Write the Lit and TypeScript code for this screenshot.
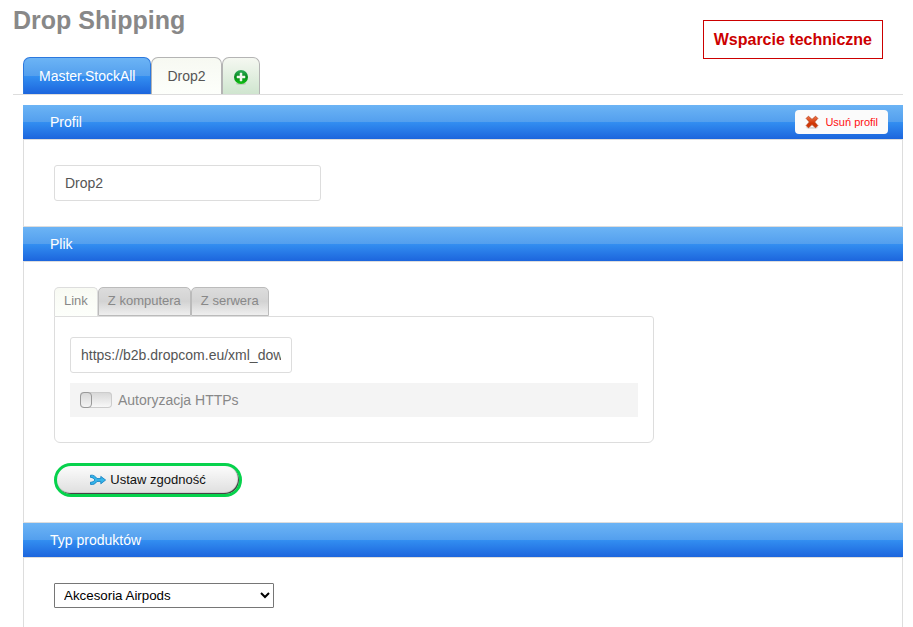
import { LitElement, html, css } from "lit";
import { customElement, state } from "lit/decorators.js";

const plusIcon = html`
  <svg width="16" height="16" viewBox="0 0 16 16" aria-hidden="true">
    <defs>
      <linearGradient id="plus-fill" x1="0" y1="0" x2="0" y2="1">
        <stop offset="0" stop-color="#2fae5c" />
        <stop offset="0.5" stop-color="#058a1c" />
        <stop offset="1" stop-color="#10c410" />
      </linearGradient>
    </defs>
    <ellipse cx="8" cy="14.8" rx="5" ry="1" fill="#000" opacity="0.15" />
    <circle cx="8" cy="8" r="7" fill="url(#plus-fill)" />
    <path d="M7 4h2v3h3v2H9v3H7V9H4V7h3z" fill="#f1f6ef" stroke="#f1f6ef" stroke-width="0.5" />
  </svg>
`;

const crossIcon = html`
  <svg width="14" height="14" viewBox="0 0 14 14" aria-hidden="true">
    <defs>
      <linearGradient id="cross-fill" x1="0" y1="0" x2="0" y2="1">
        <stop offset="0" stop-color="#f0764a" />
        <stop offset="0.6" stop-color="#d03605" />
      </linearGradient>
    </defs>
    <ellipse cx="7" cy="12.8" rx="6.5" ry="0.9" fill="#000" opacity="0.15" />
    <path
      d="M3.4 1.2 7 4.400l3.600-3.200 2.200 2.200L9.600 7l3.200 3.600-2.200 2.200L7 9.600l-3.600 3.200-2.200-2.200L4.400 7 1.200 3.400z"
      fill="url(#cross-fill)"
      stroke="#b8380f"
      stroke-width="0.8"
      stroke-linejoin="round"
    />
  </svg>
`;

const mergeIcon = html`
  <svg width="16" height="12" viewBox="0 0 16 12" aria-hidden="true">
    <path
      d="M.5 1.2C3.500 .8 5.500 2.400 7 4.600h3.800V2.400L15.600 6l-4.800 3.800V7.400H7C5.500 9.600 3.500 11 .5 10.400V8.200C2.500 8.300 4 7.400 4.900 6 4 4.300 2.500 3.400 .5 3.400z"
      fill="#35b5ea"
      stroke="#1683c4"
      stroke-width="0.9"
      stroke-linejoin="round"
    />
  </svg>
`;

@customElement("app-root")
export class AppRoot extends LitElement {
  static styles = css`
    :host {
      display: block;
      min-height: 100vh;
      padding: 0 10px 0 13px;
      box-sizing: border-box;
      background: #fff;
      color: #555;
      font: 14px/16px "Liberation Sans", Arial, sans-serif;
      --line: #ddd;
      --glossy: linear-gradient(#6cb4f5, #539fee 50%, #338ff1 50%, #1c65dd);
    }
    * {
      box-sizing: border-box;
    }
    button,
    input {
      font: inherit;
      color: inherit;
      margin: 0;
    }
    button {
      cursor: pointer;
    }
    svg {
      display: block;
      flex: none;
    }
    .top {
      display: flex;
      justify-content: space-between;
      align-items: flex-start;
      padding-right: 20px;
      border-bottom: 1px solid var(--line);
    }
    .title {
      margin: 0 0 17px;
      font-size: 25px;
      line-height: 40px;
      color: #888;
    }
    .support {
      margin-top: 20px;
      padding: 10px;
      border: 1px solid #c00;
      color: #c00;
      font-size: 16px;
      line-height: 17px;
      font-weight: bold;
      text-decoration: none;
    }
    .tabs {
      display: flex;
      padding-left: 10px;
    }
    .tab {
      display: flex;
      align-items: center;
      height: 37px;
      padding: 0 15px;
      border: 1px solid #b4b4b4;
      border-bottom: 0;
      border-radius: 7px 7px 0 0;
      background: linear-gradient(#f7f9f2, #fdfffb);
    }
    .tab.main {
      border-color: #2b78de;
      background: var(--glossy);
      color: #fff;
    }
    .tab.add {
      padding: 2px 10px 0;
      background: linear-gradient(#f5f8f1, #cfe5cf);
    }
    .sections {
      margin: 10px 0 0 10px;
    }
    .bar {
      display: flex;
      align-items: center;
      justify-content: space-between;
      height: 34px;
      padding: 0 15px 0 27px;
      background: var(--glossy);
      color: #fff;
    }
    .bar h2 {
      margin: 0;
      font-size: 14px;
      font-weight: normal;
    }
    .remove {
      display: flex;
      align-items: center;
      gap: 6px;
      height: 24px;
      padding: 0 10px;
      border: 0;
      border-radius: 4px;
      background: #fbfbfb;
      color: #f11;
      font-size: 11px;
    }
    .body {
      padding: 25px 30px;
      border: 1px solid var(--line);
    }
    .field {
      display: block;
      height: 36px;
      padding: 0 10px;
      border: 1px solid var(--line);
      border-radius: 3px;
      background: #fff;
      outline: 0;
    }
    .name {
      width: 267px;
    }
    .url {
      width: 222px;
    }
    .subtabs {
      display: flex;
    }
    .subtab {
      height: 29px;
      padding: 0 9px 2px;
      border: 1px solid #bbb;
      border-radius: 5px 5px 0 0;
      background: linear-gradient(#dcdcdc, #d3d3d3 50%, #efefef);
      color: #888;
      font-size: 13px;
    }
    .subtab.current {
      border-color: var(--line);
      border-bottom: 0;
      background: linear-gradient(#f8faf3, #fdfffb);
    }
    .source {
      max-width: 600px;
      padding: 20px 15px 25px;
      border: 1px solid var(--line);
      border-radius: 0 3px 6px 6px;
    }
    .auth {
      display: flex;
      align-items: center;
      gap: 6px;
      height: 34px;
      margin-top: 10px;
      padding: 0 10px;
      background: #f4f4f4;
      color: #888;
    }
    .switch {
      appearance: none;
      display: flex;
      width: 32px;
      height: 16px;
      border-radius: 4px;
      background: linear-gradient(#d6d6d6, #fafafa);
      box-shadow: inset 0 0 0 1px #ccc;
    }
    .switch::before {
      content: "";
      box-sizing: border-box;
      width: 12px;
      height: 16px;
      border: 1px solid #999;
      border-radius: 4px;
      background: linear-gradient(#d8d8d8, #f4f4f4);
    }
    .switch:checked {
      justify-content: flex-end;
    }
    .match {
      display: flex;
      align-items: center;
      justify-content: center;
      gap: 4px;
      width: 188px;
      height: 34px;
      margin-top: 20px;
      padding: 0;
      border: 3px solid #06d24c;
      border-radius: 17px;
      background: linear-gradient(#fcfcfc, #dedede);
      box-shadow: inset -1px -1px 1px #333;
      color: #111;
      font-size: 13px;
    }
    .type {
      display: block;
      width: 220px;
      height: 25px;
      padding: 0 5px;
      border: 1px solid #767676;
      border-radius: 1px;
      background: #fff;
      color: #000;
      font-family: inherit;
    }
  `;

  @state() private source = 0;

  private sources = ["Link", "Z komputera", "Z serwera"];

  render() {
    return html`
      <header class="top">
        <div>
          <h1 class="title">Drop Shipping</h1>
          <nav class="tabs">
            <button class="tab main">Master.StockAll</button>
            <button class="tab">Drop2</button>
            <button class="tab add" aria-label="Dodaj profil">${plusIcon}</button>
          </nav>
        </div>
        <a class="support" href="#">Wsparcie techniczne</a>
      </header>

      <main class="sections">
        <section>
          <div class="bar">
            <h2>Profil</h2>
            <button class="remove">${crossIcon} Usuń profil</button>
          </div>
          <div class="body">
            <input class="field name" type="text" aria-label="Profil" value="Drop2" />
          </div>
        </section>

        <section>
          <div class="bar"><h2>Plik</h2></div>
          <div class="body">
            <div class="subtabs">
              ${this.sources.map(
                (label, i) => html`<button
                  class="subtab ${i === this.source ? "current" : ""}"
                  @click=${() => (this.source = i)}
                >${label}</button>`
              )}
            </div>
            <div class="source">
              <input
                class="field url"
                type="text"
                aria-label="Link"
                value="https://b2b.dropcom.eu/xml_download"
              />
              <div class="auth">
                <input class="switch" id="auth" type="checkbox" />
                <label for="auth">Autoryzacja HTTPs</label>
              </div>
            </div>
            <button class="match">${mergeIcon} Ustaw zgodność</button>
          </div>
        </section>

        <section>
          <div class="bar"><h2>Typ produktów</h2></div>
          <div class="body">
            <select class="type" aria-label="Typ produktów">
              <option>Akcesoria Airpods</option>
            </select>
          </div>
        </section>
      </main>
    `;
  }
}
